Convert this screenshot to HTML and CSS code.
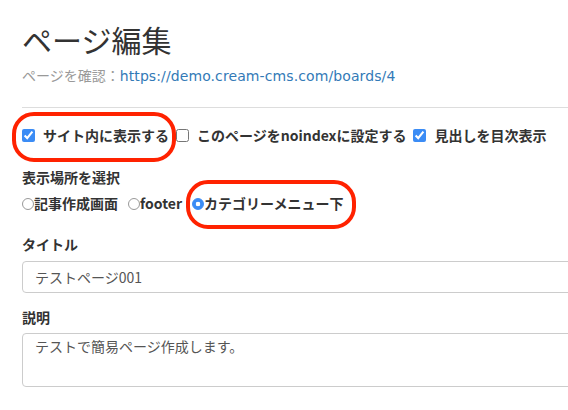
FILE: index.html
```html
<!DOCTYPE html>
<html lang="ja">
<head>
    <meta charset="utf-8">
    <title>ページ編集</title>
    <link rel="stylesheet" href="styles.css">
</head>
<body>
    <div class="page">
        <h1 class="page-title">ページ編集</h1>
        <p class="page-link">ページを確認：<a href="#">https://demo.cream-cms.com/boards/4</a></p>
        <hr class="rule">

        <div class="check-row">
            <label class="check"><input type="checkbox" checked><span>サイト内に表示する</span></label>
            <label class="check"><input type="checkbox"><span>このページをnoindexに設定する</span></label>
            <label class="check"><input type="checkbox" checked><span>見出しを目次表示</span></label>
        </div>

        <div class="label label-place">表示場所を選択</div>
        <div class="radio-row">
            <label class="radio"><input type="radio" name="place"><span>記事作成画面</span></label>
            <label class="radio"><input type="radio" name="place"><span>footer</span></label>
            <label class="radio"><input type="radio" name="place" checked><span>カテゴリーメニュー下</span></label>
        </div>

        <div class="label label-title">タイトル</div>
        <input class="field" type="text" value="テストページ001">

        <div class="label label-desc">説明</div>
        <textarea class="field area">テストで簡易ページ作成します。</textarea>

        <!-- annotations -->
        <div class="mark mark-visible"></div>
        <div class="mark mark-place"></div>
    </div>
</body>
</html>
```

FILE: styles.css
```css
html {
    overflow-x: hidden;
}

body {
    margin: 0;
    font-family: "Noto Sans CJK JP", sans-serif;
    color: #333;
    background: #fff;
}

.page {
    position: relative;
    width: 600px;
    padding: 21px 0 0 22px;
}

.page-title {
    margin: 0;
    font-size: 30px;
    font-weight: normal;
    line-height: 36px;
    color: #333;
}

.page-link {
    margin: 8px 0 0;
    font-size: 14px;
    line-height: 20px;
    color: #999;
}

.page-link a {
    font-family: "DejaVu Sans", sans-serif;
    font-size: 14px;
    letter-spacing: 0.1px;
    color: #337ab7;
    text-decoration: none;
}

.rule {
    margin: 21px 0 0;
    border: 0;
    border-top: 1px solid #ddd;
}

.check-row {
    display: flex;
    margin-top: 17px;
    height: 20px;
    align-items: center;
    gap: 7px;
}

.check {
    display: flex;
    align-items: center;
    gap: 8px;
    font-size: 14px;
    font-weight: bold;
    line-height: 20px;
}

.check input {
    width: 13px;
    height: 13px;
    margin: 0;
    accent-color: #3b8cf5;
}

.label {
    margin-top: 21px;
    font-size: 14px;
    font-weight: bold;
    line-height: 20px;
}

.label-place {
    margin-top: 22px;
}

.radio-row {
    display: flex;
    margin-top: 6px;
    gap: 10px;
}

.radio {
    display: flex;
    align-items: center;
    font-size: 14px;
    font-weight: bold;
    line-height: 20px;
}

.radio input {
    appearance: none;
    width: 12px;
    height: 12px;
    margin: 2px 0 0;
    border: 1px solid #999;
    border-radius: 50%;
    background: #fff;
}

.radio input:checked {
    border-color: #3b8cf5;
    background: radial-gradient(circle, #fff 2px, #3b8cf5 2.6px);
}

.label-title {
    margin-top: 21px;
}

.label-desc {
    margin-top: 14px;
}

.field {
    display: block;
    box-sizing: border-box;
    width: 100%;
    height: 32px;
    margin-top: 7px;
    padding: 0 12px;
    border: 1px solid #ccc;
    border-radius: 4px;
    font-family: "Noto Sans CJK JP", sans-serif;
    font-size: 14px;
    color: #555;
    background: #fff;
}

.area {
    height: 54px;
    margin-top: 6px;
    padding: 2px 12px;
    line-height: 20px;
    resize: none;
}

.mark {
    position: absolute;
    border: 4px solid #ff2200;
    border-radius: 22px;
}

.mark-visible {
    left: 12px;
    top: 112px;
    width: 156px;
    height: 42px;
}

.mark-place {
    left: 186px;
    top: 180px;
    width: 162px;
    height: 41px;
}
```
